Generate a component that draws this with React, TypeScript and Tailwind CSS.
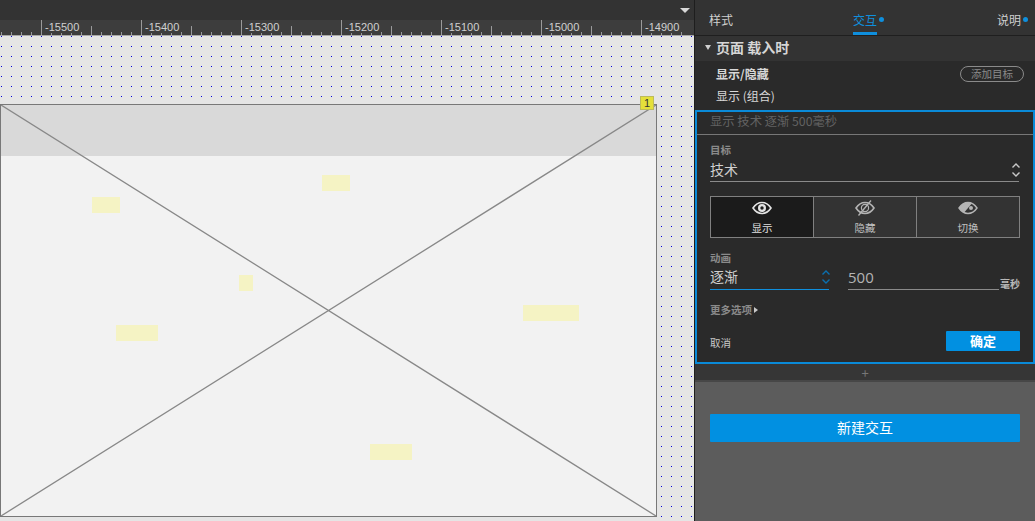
const font = { fontFamily: '"Noto Sans CJK SC", "Liberation Sans", sans-serif' };

function Ruler() {
  const ticks = Array.from({ length: 69 }, (_, i) => i);
  const labels = ["-15500", "-15400", "-15300", "-15200", "-15100", "-15000", "-14900"];
  return (
    <div className="relative h-[16px] bg-[#3d3d3d] border-b border-[#a8a8a8] overflow-hidden">
      <div className="flex h-[15px] items-end pl-[1px]">
        {ticks.map((i) => (
          <div
            key={i}
            className={
              i % 10 === 4
                ? "w-[10px] shrink-0 h-[15px] border-l border-[#9a9a9a]"
                : i % 10 === 9
                  ? "w-[10px] shrink-0 h-[9px] border-l border-[#9a9a9a]"
                  : "w-[10px] shrink-0 h-[3px] border-l border-[#9a9a9a]"
            }
          />
        ))}
      </div>
      <div className="absolute left-[45px] top-0 flex">
        {labels.map((l) => (
          <div
            key={l}
            className="w-[100px] shrink-0 text-[11px] leading-[15px] text-[#d0d0d0]"
            style={{ fontFamily: '"Liberation Sans", sans-serif' }}
          >
            <span className="bg-[#3d3d3d]">{l}</span>
          </div>
        ))}
      </div>
    </div>
  );
}

function Chevrons({ color }: { color: string }) {
  return (
    <svg width="10" height="16" viewBox="0 0 10 16" fill="none" stroke={color} strokeWidth="1.4" className="-mr-[2px]">
      <path d="M1.5 5.5 L5 2 L8.5 5.5" />
      <path d="M1.5 10.5 L5 14 L8.5 10.5" />
    </svg>
  );
}

function Eye({ kind }: { kind: "show" | "hide" | "toggle" }) {
  const c = kind === "show" ? "#e4e4e4" : "#b4b4b4";
  return (
    <svg width="20" height="16" viewBox="0 0 20 16" fill="none">
      {kind === "toggle" ? (
        <>
          <path d="M1 8 C4 3.5 7 2.5 10 2.5 C13 2.5 16 3.5 19 8 C16 12.5 13 13.5 10 13.5 C7 13.5 4 12.5 1 8 Z" stroke={c} strokeWidth="1.4" />
          <path d="M1 8 C4 3.5 7 2.5 10 2.5 C11.5 2.5 13 2.8 14 3.3 L6 12.8 C4 12 2.5 10.5 1 8 Z" fill={c} />
          <circle cx="13" cy="8" r="2" fill={c} />
        </>
      ) : (
        <>
          <path d="M1 8 C4 3.5 7 2.5 10 2.5 C13 2.5 16 3.5 19 8 C16 12.5 13 13.5 10 13.5 C7 13.5 4 12.5 1 8 Z" stroke={c} strokeWidth="1.6" />
          {kind === "show" ? (
            <circle cx="10" cy="8" r="4" fill={c} />
          ) : (
            <circle cx="10" cy="8" r="3.6" stroke={c} strokeWidth="1.2" />
          )}
          {kind === "show" && <circle cx="10" cy="8" r="1.7" fill="#1b1b1b" />}
          {kind === "hide" && <path d="M3.5 15.5 L16 0.5" stroke={c} strokeWidth="1.3" />}
        </>
      )}
    </svg>
  );
}

function Seg({ kind, label, active, last }: { kind: "show" | "hide" | "toggle"; label: string; active?: boolean; last?: boolean }) {
  return (
    <div
      className={
        (active ? "bg-[#1b1b1b] text-[#e0e0e0] " : "bg-[#333333] text-[#c0c0c0] ") +
        (last ? "" : "border-r border-[#808080] ") +
        "flex-1 flex flex-col items-center pt-[3px]"
      }
    >
      <Eye kind={kind} />
      <div className="text-[10.5px] leading-[14px] mt-[5px]">{label}</div>
    </div>
  );
}

function Canvas() {
  const notes = [
    { x: 92, y: 197, w: 28, h: 16 },
    { x: 322, y: 175, w: 28, h: 16 },
    { x: 239, y: 275, w: 14, h: 16 },
    { x: 116, y: 325, w: 42, h: 16 },
    { x: 523, y: 305, w: 56, h: 16 },
    { x: 370, y: 444, w: 42, h: 16 },
  ];
  return (
    <div className="relative flex-1 bg-[#e5e5e5] bg-[conic-gradient(at_1px_1px,#e5e5e5_75%,#0000e0_75%)] bg-[length:10px_10px] bg-[position:1px_0]">
      <div className="absolute left-0 top-[68px] w-[657px] h-[413px] border border-[#787878] bg-[#f2f2f2]">
        <div className="h-[51px] bg-[#d9d9d9]" />
        <svg className="absolute inset-0 w-full h-full" viewBox="0 0 655 411" preserveAspectRatio="none">
          <path d="M0 0 L655 411 M655 0 L0 411" stroke="#888888" strokeWidth="1.3" fill="none" />
        </svg>
      </div>
      {notes.map((n, i) => (
        <div
          key={i}
          className="absolute bg-[#f5f3c4]"
          style={{ left: n.x, top: n.y - 36, width: n.w, height: n.h }}
        />
      ))}
      <div className="absolute left-[640px] top-[60px] w-[14px] h-[14px] bg-[#e4e03a] border border-[#bdbb5a] text-[11px] leading-[12px] text-center text-[#333333]" style={{ fontFamily: '"Liberation Sans", sans-serif' }}>
        1
      </div>
    </div>
  );
}

function Panel() {
  return (
    <div className="w-[341px] shrink-0 border-l border-[#1e1e1e] flex flex-col bg-[#5c5c5c]">
      <div className="h-[36px] shrink-0 bg-[#333333] border-b border-[#1f1f1f] flex justify-between pl-[14px] pr-[7px] text-[12px] text-[#d0d0d0]">
        <div className="leading-[39px]">样式</div>
        <div className="flex items-start h-[35px] gap-[2px] text-[#0f8fdd] ml-[7px]">
          <span className="border-b-[3px] border-[#0f8fdd] h-[35px] leading-[39px]">交互</span>
          <span className="w-[5px] h-[5px] rounded-full bg-[#0f8fdd] mt-[17px]" />
        </div>
        <div className="flex items-start h-[35px] gap-[2px]">
          <span className="leading-[39px]">说明</span>
          <span className="w-[5px] h-[5px] rounded-full bg-[#0f8fdd] mt-[17px]" />
        </div>
      </div>
      <div className="h-[25px] shrink-0 bg-[#333333] flex items-center pl-[10px] pb-[3px] gap-[5px] text-[14px] font-bold text-[#d6d6d6]">
        <span className="w-0 h-0 border-x-[3.5px] border-x-transparent border-t-[5px] border-t-[#d0d0d0]" />
        页面 载入时
      </div>
      <div className="h-[49px] shrink-0 bg-[#2a2a2a] pl-[21px] pr-[11px] text-[12px] text-[#d8d8d8]">
        <div className="flex items-center justify-between h-[25px]">
          <span className="font-bold">显示/隐藏</span>
          <span className="w-[64px] h-[16px] rounded-full border border-[#8a8a8a] text-[10.5px] leading-[14px] text-center text-[#8a8a8a]">添加目标</span>
        </div>
        <div className="leading-[20px]">显示 (组合)</div>
      </div>
      <div className="h-[254px] shrink-0 bg-[#2a2a2a] border-2 border-[#0a8ad8] flex flex-col">
        <div className="h-[23px] shrink-0 border-b border-[#777777] pl-[13px] text-[12.3px] leading-[18px] text-[#626262]">显示 技术 逐渐 500毫秒</div>
        <div className="px-[13px] flex-1 flex flex-col">
          <div className="text-[10.5px] leading-[14px] text-[#8a8a8a] mt-[8px] font-bold">目标</div>
          <div className="h-[24px] mt-[1px] border-b border-[#8a8a8a] flex items-center justify-between text-[14px] text-[#cfcfcf] mr-[1px]">
            技术
            <Chevrons color="#c8c8c8" />
          </div>
          <div className="h-[42px] mt-[14px] border border-[#808080] flex">
            <Seg kind="show" label="显示" active />
            <Seg kind="hide" label="隐藏" />
            <Seg kind="toggle" label="切换" last />
          </div>
          <div className="text-[10.5px] leading-[14px] text-[#8a8a8a] mt-[13px] font-bold">动画</div>
          <div className="flex mt-[1px] items-end">
            <div className="w-[119px] h-[24px] border-b border-[#0f8fdd] flex items-center justify-between text-[14px] text-[#cfcfcf] pb-[2px]">
              逐渐
              <Chevrons color="#0a6fae" />
            </div>
            <div className="w-[151px] ml-[19px] h-[24px] border-b border-[#8a8a8a] flex items-center text-[15px] text-[#b4b4b4] pb-[1px]" style={{ fontFamily: '"Open Sans", sans-serif' }}>
              500
            </div>
            <div className="text-[10px] leading-[12px] font-bold text-[#b8b8b8] ml-[1px]">毫秒</div>
          </div>
          <div className="flex items-center gap-[2px] mt-[13px] text-[10.5px] leading-[14px] font-bold text-[#8a8a8a]">
            更多选项
            <span className="w-0 h-0 border-y-[3px] border-y-transparent border-l-[4px] border-l-[#c8c8c8]" />
          </div>
          <div className="flex items-start justify-between mt-[14px]">
            <span className="text-[10.5px] leading-[14px] mt-[5px] text-[#c8c8c8]">取消</span>
            <span className="w-[74px] h-[20px] bg-[#0190e1] rounded-[1px] text-center text-[13px] font-bold leading-[20px] text-white">确定</span>
          </div>
        </div>
      </div>
      <div className="h-[16px] shrink-0 bg-[#363636] flex items-center justify-center text-[13px] leading-none text-[#777777]">+</div>
      <div className="h-[2px] shrink-0 bg-[#474747]" />
      <div className="px-[15px] pt-[32px]">
        <div className="h-[28px] bg-[#0190e1] rounded-[1px] text-center text-[14px] leading-[26px] text-white">新建交互</div>
      </div>
    </div>
  );
}

export default function App() {
  return (
    <div className="flex w-[1035px] h-[521px] overflow-hidden" style={font}>
      <div className="w-[694px] shrink-0 flex flex-col">
        <div className="h-[20px] shrink-0 bg-[#333333] flex justify-end items-center pr-[4px]">
          <span className="w-0 h-0 border-x-[5px] border-x-transparent border-t-[5px] border-t-[#d8d8d8]" />
        </div>
        <Ruler />
        <Canvas />
      </div>
      <Panel />
    </div>
  );
}
